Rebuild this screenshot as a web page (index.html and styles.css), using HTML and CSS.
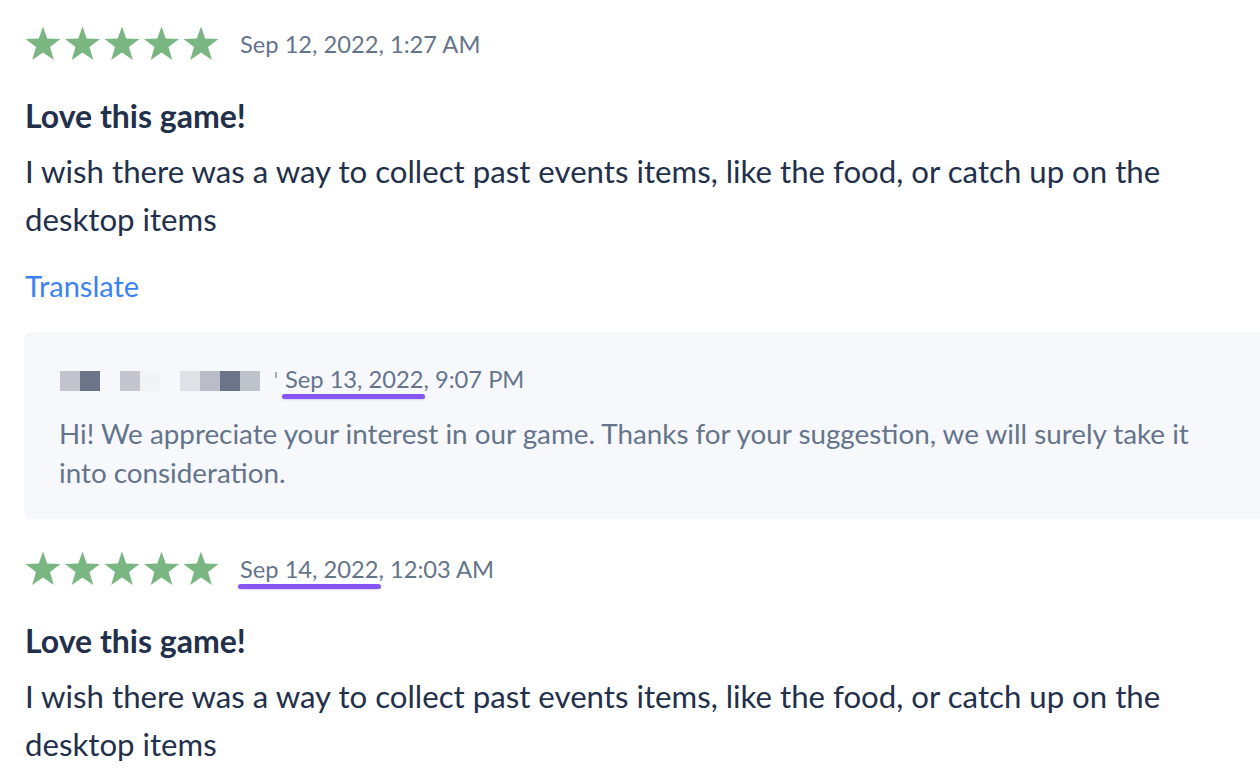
FILE: index.html
```html
<!DOCTYPE html>
<html>
<head>
<meta charset="utf-8">
<link rel="stylesheet" href="styles.css">
</head>
<body>
<div class="feed">
  <div class="review">
    <div class="meta">
      <svg class="stars" viewBox="0 0 196 36" width="196" height="36">
        <defs><polygon id="st" points="18,0.5 22.2,12.6 35.5,13 25,21 28.8,34 18,26.4 7.2,34 11,21 0.5,13 13.8,12.6"/></defs>
        <use href="#st" x="0"/><use href="#st" x="39.5"/><use href="#st" x="79"/><use href="#st" x="118.5"/><use href="#st" x="158"/>
      </svg>
      <span class="date">Sep 12, 2022, 1:27 AM</span>
    </div>
    <h3 class="title">Love this game!</h3>
    <p class="body">I wish there was a way to collect past events items, like the food, or catch up on the desktop items</p>
    <a class="translate">Translate</a>
  </div>
  <div class="reply">
    <div class="reply-meta">
      <span class="px"><i class="c1"></i><i class="c2"></i><b class="sp"></b><i class="c3"></i><i class="c4"></i><b class="sp"></b><i class="c5"></i><i class="c6"></i><i class="c2"></i><i class="c7"></i></span>
      <span class="tick"></span>
      <span class="date"><span class="mark">Sep 13, 2022</span>, 9:07 PM</span>
    </div>
    <p class="reply-text">Hi! We appreciate your interest in our game. Thanks for your suggestion, we will surely take it into consideration.</p>
  </div>
  <div class="review">
    <div class="meta">
      <svg class="stars" viewBox="0 0 196 36" width="196" height="36">
        <use href="#st" x="0"/><use href="#st" x="39.5"/><use href="#st" x="79"/><use href="#st" x="118.5"/><use href="#st" x="158"/>
      </svg>
      <span class="date"><span class="mark">Sep 14, 2022</span>, 12:03 AM</span>
    </div>
    <h3 class="title">Love this game!</h3>
    <p class="body">I wish there was a way to collect past events items, like the food, or catch up on the desktop items</p>
  </div>
</div>
</body>
</html>
```

FILE: styles.css
```css
html, body { margin: 0; padding: 0; background: #ffffff; }
body { font-family: Lato, "Open Sans", sans-serif; color: #22304b; width: 1260px; overflow: hidden; }
.feed { padding: 26px 0 0 25px; }
.review { display: flex; flex-direction: column; align-items: flex-start; }
.meta { display: flex; align-items: center; gap: 19px; height: 36px; }
.stars { fill: #7ab682; display: block; }
.date { font-size: 23.7px; color: #64748b; line-height: 30px; }
.mark { position: relative; }
.mark::after { content: ""; position: absolute; left: -3px; right: -1px; bottom: -6px; height: 5px; border-radius: 3px; background: #8655f6; box-shadow: 0 1px 2px rgba(80,60,160,0.2); }
.meta .mark::after { left: -2px; right: -2px; }
.title { font-size: 32px; font-weight: 700; margin: 36px 0 0 0; line-height: 36px; }
.body { font-size: 31.2px; line-height: 48px; margin: 13px 0 0 0; max-width: 1180px; }
.translate { font-size: 29px; color: #3b82f6; line-height: 36px; margin-top: 25px; }
.reply { margin-top: 28px; margin-left: -1px; background: #f7f8fc; border-radius: 8px 0 0 8px; padding: 29px 36px 27px 35px; }
.reply-meta { display: flex; align-items: center; height: 36px; }
.px { display: flex; margin-left: 1px; margin-top: 4px; }
.px i { display: block; width: 20px; height: 20px; }
.px .sp { display: block; width: 20px; height: 20px; }
.c1 { background: #c1c4cc; }
.c2 { background: #6b7489; }
.c3 { background: #c3c6ce; }
.c4 { background: #f2f3f6; }
.c5 { background: #dfe1e6; }
.c6 { background: #b9bdc8; }
.c7 { background: #bec2cb; }
.tick { display: block; width: 2px; height: 6px; background: #a3a9b7; margin: 0 8px 8px 15px; }
.reply-text { font-size: 27.8px; line-height: 39px; color: #64748b; margin: 17px 0 0 0; max-width: 1150px; }
.reply + .review { margin-top: 32px; }
```
